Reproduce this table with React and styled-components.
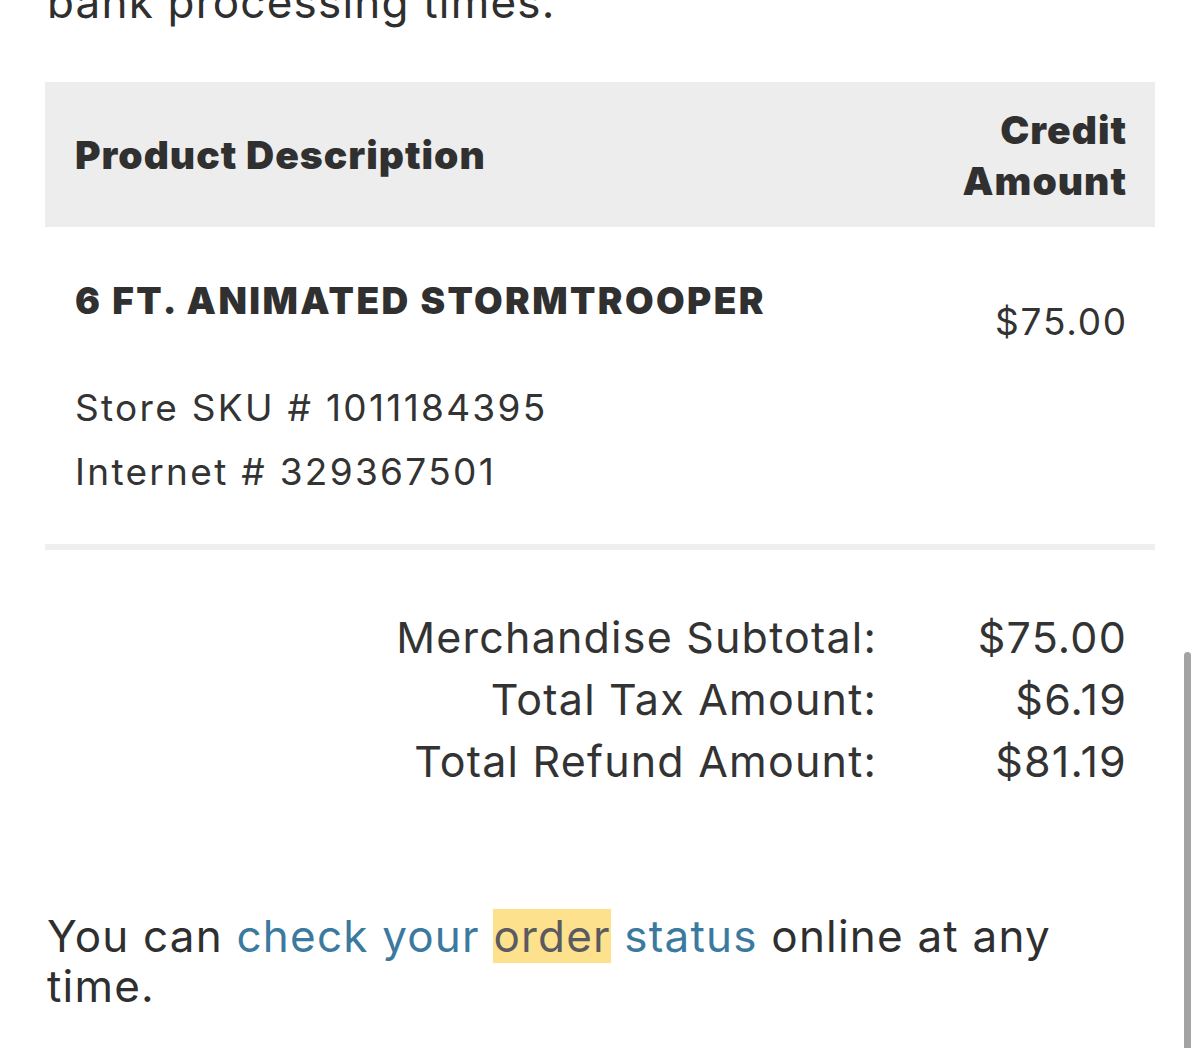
import styled, { createGlobalStyle } from "styled-components"

const GlobalStyle = createGlobalStyle`
  html, body {
    margin: 0;
    padding: 0;
    background: #ffffff;
  }
  body {
    font-family: Inter, "Noto Sans", "Liberation Sans", sans-serif;
    color: #333333;
    overflow: hidden;
    height: 1048px;
  }
`

const totals = [
  { label: "Merchandise Subtotal:", value: "$75.00" },
  { label: "Total Tax Amount:", value: "$6.19" },
  { label: "Total Refund Amount:", value: "$81.19" },
]

function App() {
  return (
    <>
      <GlobalStyle />
      <Page>
        <Paragraph $top>bank processing times.</Paragraph>

        <TableHeader>
          <HeadCell>Product Description</HeadCell>
          <HeadCell $right>
            Credit
            <br />
            Amount
          </HeadCell>
        </TableHeader>

        <ItemRow>
          <div>
            <ItemName>6 FT. ANIMATED STORMTROOPER</ItemName>
            <Meta $first>Store SKU # 1011184395</Meta>
            <Meta>Internet # 329367501</Meta>
          </div>
          <Price>$75.00</Price>
        </ItemRow>

        <Divider />

        <Totals>
          {totals.map((row) => (
            <TotalRow key={row.label}>
              <TotalLabel>{row.label}</TotalLabel>
              <TotalValue>{row.value}</TotalValue>
            </TotalRow>
          ))}
        </Totals>

        <Paragraph>
          You can <Link>check your <Mark>order</Mark> status</Link> online at
          any time.
        </Paragraph>
      </Page>
      <ScrollIndicator />
    </>
  )
}

const Page = styled.div`
  padding: 0 45px;
  width: 1110px;
`

const Paragraph = styled.p`
  margin: ${({ $top }) => ($top ? "-23px 0 55px" : "119px 0 0")};
  padding: 0 40px 0 2px;
  font-size: 44px;
  line-height: 50px;
  letter-spacing: 1.2px;
  color: #2f2f2f;
`

const TableHeader = styled.div`
  display: grid;
  grid-template-columns: 1fr auto;
  align-items: center;
  background-color: #ededed;
  height: 145px;
  padding: 0 28px 0 30px;
`

const HeadCell = styled.div`
  font-size: 39px;
  font-weight: 900;
  line-height: 51px;
  letter-spacing: 1px;
  color: #303030;
  text-align: ${({ $right }) => ($right ? "right" : "left")};
`

const ItemRow = styled.div`
  display: grid;
  grid-template-columns: 1fr auto;
  align-items: start;
  padding: 51px 27px 40px 30px;
`

const ItemName = styled.div`
  font-size: 37px;
  font-weight: 900;
  line-height: 46px;
  letter-spacing: 2.4px;
  color: #303030;
`

const Meta = styled.div`
  font-size: 37px;
  line-height: 64px;
  letter-spacing: 2.3px;
  margin-top: ${({ $first }) => ($first ? "52px" : "0")};
  color: #333333;
`

const Price = styled.div`
  font-size: 37px;
  line-height: 46px;
  letter-spacing: 1.8px;
  padding-top: 21px;
  color: #333333;
`

const Divider = styled.div`
  height: 6px;
  background-color: #efefef;
`

const Totals = styled.div`
  display: flex;
  flex-direction: column;
  margin-top: 56px;
  padding-right: 28px;
`

const TotalRow = styled.div`
  display: grid;
  grid-template-columns: 1fr 250px;
  font-size: 43px;
  line-height: 62px;
  letter-spacing: 1.2px;
  color: #333333;
`

const TotalLabel = styled.div`
  text-align: right;
`

const TotalValue = styled.div`
  text-align: right;
`

const Link = styled.span`
  color: #3b7a9e;
`

const Mark = styled.span`
  background-color: #fde18d;
  color: #5a5a60;
`

const ScrollIndicator = styled.div`
  position: fixed;
  left: 1184px;
  top: 652px;
  width: 7px;
  height: 420px;
  border-radius: 4px;
  background-color: #a3a3a3;
`

export default App
